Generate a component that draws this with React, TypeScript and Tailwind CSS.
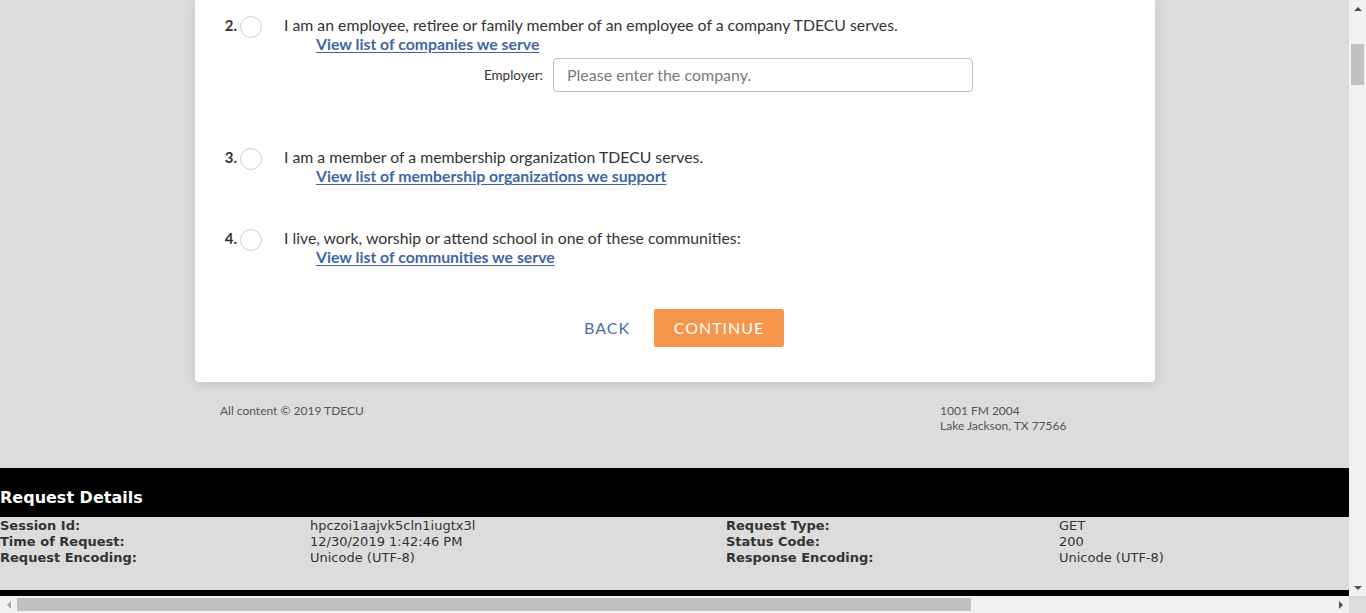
import React from "react";

const lato = { fontFamily: "Lato, 'Open Sans', sans-serif" };

function Radio() {
  return <div className="mt-[1px] w-[22px] h-[22px] rounded-full border border-[#cfcfcf] bg-white shrink-0" />;
}

function Item({ n, text, link, children, className = "" }: { n: string; text: string; link: string; children?: React.ReactNode; className?: string }) {
  return (
    <div className={"flex " + className}>
      <div className="w-[45px] pr-[3px] text-right text-[15px] leading-[19px] font-bold text-[#333] pt-[1px]">{n}</div>
      <Radio />
      <div className="ml-[22px] flex flex-col">
        <div className="text-[15.8px] leading-[19px] text-[#333]">{text}</div>
        <div className="pl-[32px] text-[15.8px] leading-[19px] font-bold text-[#3f66a4] underline underline-offset-[2px]">{link}</div>
        {children}
      </div>
    </div>
  );
}

export default function App() {
  const mono = { fontFamily: "'DejaVu Sans', Verdana, sans-serif" };
  return (
    <div className="w-[1366px] h-[613px] overflow-hidden flex flex-col bg-[#dcdcdc]" style={lato}>
      <div className="flex h-[596px]">
        <div className="w-[1349px] h-[596px] overflow-hidden flex flex-col">
          <div className="pl-[195px]">
            <div className="w-[960px] h-[382px] bg-white rounded-b-[4px] shadow-[0_2px_12px_rgba(0,0,0,0.12)] pt-[15px] flex flex-col">
              <Item n="2." text="I am an employee, retiree or family member of an employee of a company TDECU serves." link="View list of companies we serve">
                <div className="flex items-center mt-[5px]">
                  <div className="w-[259px] text-right text-[13.5px] text-[#333]">Employer:</div>
                  <div className="ml-[10px] w-[420px] h-[34px] border border-[#bdbdbd] rounded-[4px] flex items-center pl-[13px] text-[16px] text-[#7a7a7a]">Please enter the company.</div>
                </div>
              </Item>
              <Item className="mt-[55px]" n="3." text="I am a member of a membership organization TDECU serves." link="View list of membership organizations we support" />
              <Item className="mt-[43px]" n="4." text="I live, work, worship or attend school in one of these communities:" link="View list of communities we serve" />
              <div className="flex justify-center items-center gap-[8px] mt-[43px] pl-[2px]">
                <div className="px-[16px] h-[38px] flex items-center text-[16px] tracking-[1px] text-[#4a6ea8]">BACK</div>
                <div className="w-[130px] h-[38px] rounded-[2px] bg-[#f7964a] flex items-center justify-center text-[16px] tracking-[1px] text-white">CONTINUE</div>
              </div>
            </div>
          </div>
          <div className="h-[86px] flex pl-[220px] pt-[21px] text-[12px] leading-[15px] text-[#555]">
            <div className="w-[720px]">All content © 2019 TDECU</div>
            <div>
              <div>1001 FM 2004</div>
              <div>Lake Jackson, TX 77566</div>
            </div>
          </div>
          <div className="h-[49px] bg-black flex items-end pb-[9px] text-white font-bold text-[16px] leading-[20px]" style={mono}>Request Details</div>
          <div className="h-[73px] pt-[1px] grid grid-cols-[310px_416px_333px_1fr] auto-rows-[16px] text-[13px] leading-[16px] text-[#333] content-start" style={mono}>
            <div className="font-bold">Session Id:</div>
            <div>hpczoi1aajvk5cln1iugtx3l</div>
            <div className="font-bold">Request Type:</div>
            <div>GET</div>
            <div className="font-bold">Time of Request:</div>
            <div>12/30/2019 1:42:46 PM</div>
            <div className="font-bold">Status Code:</div>
            <div>200</div>
            <div className="font-bold">Request Encoding:</div>
            <div>Unicode (UTF-8)</div>
            <div className="font-bold">Response Encoding:</div>
            <div>Unicode (UTF-8)</div>
          </div>
          <div className="h-[6px] bg-black" />
        </div>
        <div className="w-[17px] h-[596px] bg-[#f1f1f1] flex flex-col items-center">
          <div className="h-[17px] flex items-center justify-center">
            <div className="w-0 h-0 border-l-[4px] border-r-[4px] border-b-[4px] border-l-transparent border-r-transparent border-b-[#505050]" />
          </div>
          <div className="mt-[27px] w-[13px] h-[41px] bg-[#c1c1c1]" />
          <div className="flex-1" />
          <div className="h-[17px] flex items-center justify-center">
            <div className="w-0 h-0 border-l-[4px] border-r-[4px] border-t-[4px] border-l-transparent border-r-transparent border-t-[#505050]" />
          </div>
        </div>
      </div>
      <div className="flex h-[17px]">
        <div className="w-[1349px] bg-[#f1f1f1] flex items-center">
          <div className="w-[17px] flex items-center justify-center">
            <div className="w-0 h-0 border-t-[4px] border-b-[4px] border-r-[4px] border-t-transparent border-b-transparent border-r-[#a3a3a3]" />
          </div>
          <div className="w-[954px] h-[13px] bg-[#c1c1c1]" />
          <div className="flex-1" />
          <div className="w-[17px] flex items-center justify-center">
            <div className="w-0 h-0 border-t-[4px] border-b-[4px] border-l-[4px] border-t-transparent border-b-transparent border-l-[#505050]" />
          </div>
        </div>
        <div className="w-[17px] bg-[#dcdcdc]" />
      </div>
    </div>
  );
}
